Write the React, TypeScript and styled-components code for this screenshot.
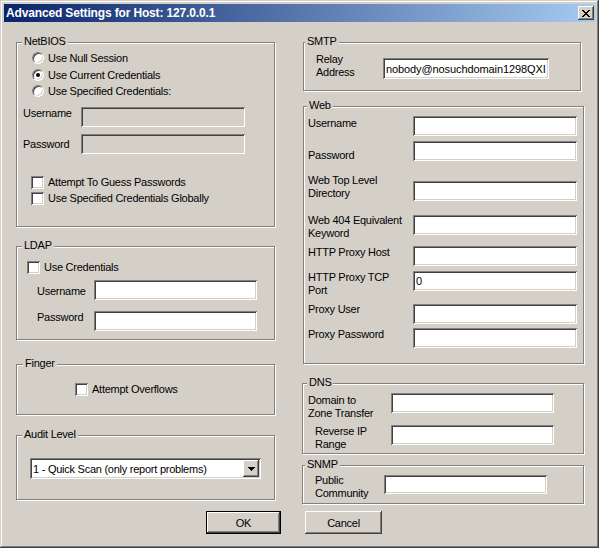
import React from "react";
import styled, { createGlobalStyle, css } from "styled-components";

const FACE = "#d4d0c8";
const FONT = `"Liberation Sans", Arial, sans-serif`;

const GlobalStyle = createGlobalStyle`
  html, body { margin: 0; padding: 0; background: ${FACE}; }
  body { font-family: ${FONT}; font-size: 11px; color: #000; }
  *, *::before, *::after { box-sizing: border-box; }
`;

const raised = css`
  box-shadow: inset -1px -1px #404040, inset 1px 1px #ffffff,
    inset -2px -2px #808080, inset 2px 2px ${FACE};
`;
const sunken = css`
  box-shadow: inset 1px 1px #808080, inset -1px -1px #ffffff,
    inset 2px 2px #404040, inset -2px -2px ${FACE};
`;

const Window = styled.div`
  width: 599px;
  height: 548px;
  padding: 4px;
  background: ${FACE};
  box-shadow: inset -1px -1px #404040, inset 1px 1px ${FACE},
    inset -2px -2px #808080, inset 2px 2px #ffffff;
  display: flex;
  flex-direction: column;
  font-family: ${FONT};
  font-size: 11px;
  letter-spacing: -0.25px;
  overflow: hidden;
`;

const TitleBar = styled.div`
  height: 18px;
  flex: none;
  display: flex;
  align-items: center;
  padding: 0 1px 0 2px;
  background: linear-gradient(to right, #0a246a, #a6caf0);
`;

const Title = styled.div`
  flex: 1;
  color: #fff;
  font-weight: bold;
  font-size: 12px;
  letter-spacing: -0.15px;
  line-height: 18px;
  white-space: nowrap;
`;

const CloseButton = styled.div`
  width: 16px;
  height: 14px;
  background: ${FACE};
  ${raised};
  display: flex;
  align-items: center;
  justify-content: center;
`;

const Body = styled.div`
  display: flex;
  flex-direction: column;
  padding-left: 12px;
`;

const Columns = styled.div`
  display: flex;
  align-items: flex-start;
`;

const Column = styled.div<{ $w: number; $ml?: number }>`
  width: ${(p) => p.$w}px;
  margin-left: ${(p) => p.$ml ?? 0}px;
  display: flex;
  flex-direction: column;
  align-items: flex-start;
`;

const Group = styled.div<{ $w: number; $h: number; $mt: number; $ml?: number }>`
  position: relative;
  width: ${(p) => p.$w}px;
  height: ${(p) => p.$h}px;
  margin-top: ${(p) => p.$mt}px;
  margin-left: ${(p) => p.$ml ?? 0}px;
  border: 1px solid #808080;
  box-shadow: inset 1px 1px #ffffff, 1px 1px #ffffff;
  display: flex;
  flex-direction: column;
  align-items: flex-start;
`;

const Legend = styled.div<{ $x: number }>`
  position: absolute;
  top: -8px;
  left: ${(p) => p.$x - 3}px;
  padding: 0 2px;
  background: ${FACE};
  line-height: 13px;
  white-space: nowrap;
`;

const OptionRow = styled.div<{ $mt: number; $ml: number }>`
  display: flex;
  align-items: center;
  gap: 4px;
  height: 16px;
  margin-top: ${(p) => p.$mt}px;
  margin-left: ${(p) => p.$ml}px;
  line-height: 13px;
  white-space: nowrap;
`;

const Radio = styled.span<{ $checked?: boolean }>`
  position: relative;
  width: 12px;
  height: 12px;
  flex: none;
  border-radius: 50%;
  background: #fff;
  border: 1px solid;
  border-color: #808080 #ffffff #ffffff #808080;
  box-shadow: inset 1px 1px #404040, inset -1px -1px ${FACE};
  &::after {
    content: "";
    display: ${(p) => (p.$checked ? "block" : "none")};
    position: absolute;
    left: 3px;
    top: 3px;
    width: 4px;
    height: 4px;
    border-radius: 50%;
    background: #000;
  }
`;

const Check = styled.span`
  width: 13px;
  height: 13px;
  flex: none;
  background: #fff;
  ${sunken};
`;

const FieldRow = styled.div<{ $mt: number; $ml: number }>`
  display: flex;
  align-items: flex-start;
  margin-top: ${(p) => p.$mt}px;
  margin-left: ${(p) => p.$ml}px;
`;

const FieldLabel = styled.div<{ $w: number; $dy?: number }>`
  width: ${(p) => p.$w}px;
  flex: none;
  margin-top: ${(p) => p.$dy ?? 0}px;
  line-height: 13px;
  white-space: nowrap;
`;

const TextBox = styled.input<{ $w: number; $h: number; $dy?: number; $off?: boolean }>`
  width: ${(p) => p.$w}px;
  height: ${(p) => p.$h}px;
  flex: none;
  margin: ${(p) => p.$dy ?? 0}px 0 0 0;
  padding: 0 2px 0 3px;
  border: none;
  outline: none;
  font-family: ${FONT};
  font-size: 11px;
  letter-spacing: -0.1px;
  color: #000;
  background: ${(p) => (p.$off ? FACE : "#fff")};
  ${sunken};
`;

const Combo = styled.div<{ $mt: number; $ml: number; $w: number }>`
  width: ${(p) => p.$w}px;
  height: 21px;
  margin-top: ${(p) => p.$mt}px;
  margin-left: ${(p) => p.$ml}px;
  background: #fff;
  ${sunken};
  display: flex;
  align-items: center;
  padding-right: 2px;
`;

const ComboText = styled.div`
  flex: 1;
  padding-left: 3px;
  white-space: nowrap;
  overflow: hidden;
`;

const ComboButton = styled.div`
  width: 16px;
  height: 17px;
  flex: none;
  background: ${FACE};
  ${raised};
  display: flex;
  align-items: center;
  justify-content: center;
`;

const ButtonRow = styled.div`
  display: flex;
  gap: 24px;
  margin-top: 7px;
  margin-left: 190px;
`;

const Button = styled.button<{ $w: number; $default?: boolean }>`
  width: ${(p) => p.$w}px;
  height: 23px;
  padding: 0;
  border: ${(p) => (p.$default ? "1px solid #000" : "none")};
  background: ${FACE};
  ${raised};
  font-family: ${FONT};
  font-size: 11px;
  letter-spacing: -0.25px;
  color: #000;
`;

const X_PATTERN = [
  "11....11",
  ".11..11.",
  "..1111..",
  "...11...",
  "..1111..",
  ".11..11.",
  "11....11",
];

function CloseGlyph() {
  const rects: React.ReactNode[] = [];
  X_PATTERN.forEach((row, y) =>
    row.split("").forEach((c, x) => {
      if (c === "1") rects.push(<rect key={`${x}-${y}`} x={x} y={y} width={1} height={1} />);
    })
  );
  return (
    <svg width="8" height="7" viewBox="0 0 8 7" shapeRendering="crispEdges" fill="#000">
      {rects}
    </svg>
  );
}

function DownArrow() {
  return (
    <svg width="7" height="4" viewBox="0 0 7 4" shapeRendering="crispEdges" fill="#000">
      <rect x="0" y="0" width="7" height="1" />
      <rect x="1" y="1" width="5" height="1" />
      <rect x="2" y="2" width="3" height="1" />
      <rect x="3" y="3" width="1" height="1" />
    </svg>
  );
}

type Spec = {
  label: React.ReactNode;
  mt: number;
  ml?: number;
  lw?: number;
  labelDy?: number;
  inputDy?: number;
  value?: string;
};

function Field({
  spec,
  ml,
  lw,
  iw,
  ih,
  off,
}: {
  spec: Spec;
  ml: number;
  lw: number;
  iw: number;
  ih: number;
  off?: boolean;
}) {
  return (
    <FieldRow $mt={spec.mt} $ml={spec.ml ?? ml}>
      <FieldLabel $w={spec.lw ?? lw} $dy={spec.labelDy}>
        {spec.label}
      </FieldLabel>
      <TextBox
        $w={iw}
        $h={ih}
        $dy={spec.inputDy}
        $off={off}
        readOnly
        value={spec.value ?? ""}
      />
    </FieldRow>
  );
}

const webRows: Spec[] = [
  { label: "Username", mt: 9, labelDy: 1 },
  { label: "Password", mt: 5, labelDy: 8 },
  { label: <>Web Top Level<br />Directory</>, mt: 12, inputDy: 7 },
  { label: <>Web 404 Equivalent<br />Keyword</>, mt: 13, inputDy: 1 },
  { label: "HTTP Proxy Host", mt: 6 },
  { label: <>HTTP Proxy TCP<br />Port</>, mt: 5, value: "0" },
  { label: "Proxy User", mt: 6, inputDy: 1 },
  { label: "Proxy Password", mt: 4 },
];

export default function App() {
  return (
    <>
      <GlobalStyle />
      <Window>
        <TitleBar>
          <Title>Advanced Settings for Host: 127.0.0.1</Title>
          <CloseButton>
            <CloseGlyph />
          </CloseButton>
        </TitleBar>
        <Body>
          <Columns>
            <Column $w={259}>
              <Group $w={259} $h={185} $mt={20}>
                <Legend $x={8}>NetBIOS</Legend>
                <OptionRow $mt={7} $ml={15}>
                  <Radio />
                  Use Null Session
                </OptionRow>
                <OptionRow $mt={1} $ml={15}>
                  <Radio $checked />
                  Use Current Credentials
                </OptionRow>
                <OptionRow $mt={0} $ml={15}>
                  <Radio />
                  Use Specified Credentials:
                </OptionRow>
                <Field spec={{ label: "Username", mt: 8 }} ml={6} lw={58} iw={164} ih={20} off />
                <Field spec={{ label: "Password", mt: 7, labelDy: 4 }} ml={6} lw={58} iw={164} ih={20} off />
                <OptionRow $mt={20} $ml={14}>
                  <Check />
                  Attempt To Guess Passwords
                </OptionRow>
                <OptionRow $mt={0} $ml={14}>
                  <Check />
                  Use Specified Credentials Globally
                </OptionRow>
              </Group>

              <Group $w={259} $h={94} $mt={19}>
                <Legend $x={8}>LDAP</Legend>
                <OptionRow $mt={12} $ml={10}>
                  <Check />
                  Use Credentials
                </OptionRow>
                <Field spec={{ label: "Username", mt: 5, labelDy: 5 }} ml={20} lw={57} iw={163} ih={20} />
                <Field spec={{ label: "Password", mt: 11 }} ml={20} lw={57} iw={163} ih={20} />
              </Group>

              <Group $w={259} $h={51} $mt={24}>
                <Legend $x={9}>Finger</Legend>
                <OptionRow $mt={16} $ml={58}>
                  <Check />
                  Attempt Overflows
                </OptionRow>
              </Group>

              <Group $w={259} $h={65} $mt={20}>
                <Legend $x={8}>Audit Level</Legend>
                <Combo $mt={22} $ml={13} $w={231}>
                  <ComboText>1 - Quick Scan (only report problems)</ComboText>
                  <ComboButton>
                    <DownArrow />
                  </ComboButton>
                </Combo>
              </Group>
            </Column>

            <Column $w={283} $ml={27}>
              <Group $w={278} $h={49} $mt={20} $ml={1}>
                <Legend $x={4}>SMTP</Legend>
                <Field
                  spec={{
                    label: <>Relay<br />Address</>,
                    mt: 10,
                    inputDy: 5,
                    value: "nobody@nosuchdomain1298QXI",
                  }}
                  ml={12}
                  lw={67}
                  iw={166}
                  ih={21}
                />
              </Group>

              <Group $w={281} $h={258} $mt={15} $ml={1}>
                <Legend $x={6}>Web</Legend>
                {webRows.map((r, i) => (
                  <Field key={i} spec={r} ml={4} lw={105} iw={164} ih={20} />
                ))}
              </Group>

              <Group $w={282} $h={71} $mt={19}>
                <Legend $x={7}>DNS</Legend>
                <Field
                  spec={{ label: <>Domain to<br />Zone Transfer</>, mt: 9, labelDy: 1 }}
                  ml={5}
                  lw={83}
                  iw={163}
                  ih={20}
                />
                <Field
                  spec={{ label: <>Reverse IP<br />Range</>, mt: 5 }}
                  ml={12}
                  lw={76}
                  iw={163}
                  ih={20}
                />
              </Group>

              <Group $w={282} $h={39} $mt={11}>
                <Legend $x={5}>SNMP</Legend>
                <Field
                  spec={{ label: <>Public<br />Community</>, mt: 8, inputDy: 1 }}
                  ml={12}
                  lw={69}
                  iw={163}
                  ih={19}
                />
              </Group>
            </Column>
          </Columns>

          <ButtonRow>
            <Button $w={75} $default>
              OK
            </Button>
            <Button $w={77}>Cancel</Button>
          </ButtonRow>
        </Body>
      </Window>
    </>
  );
}
